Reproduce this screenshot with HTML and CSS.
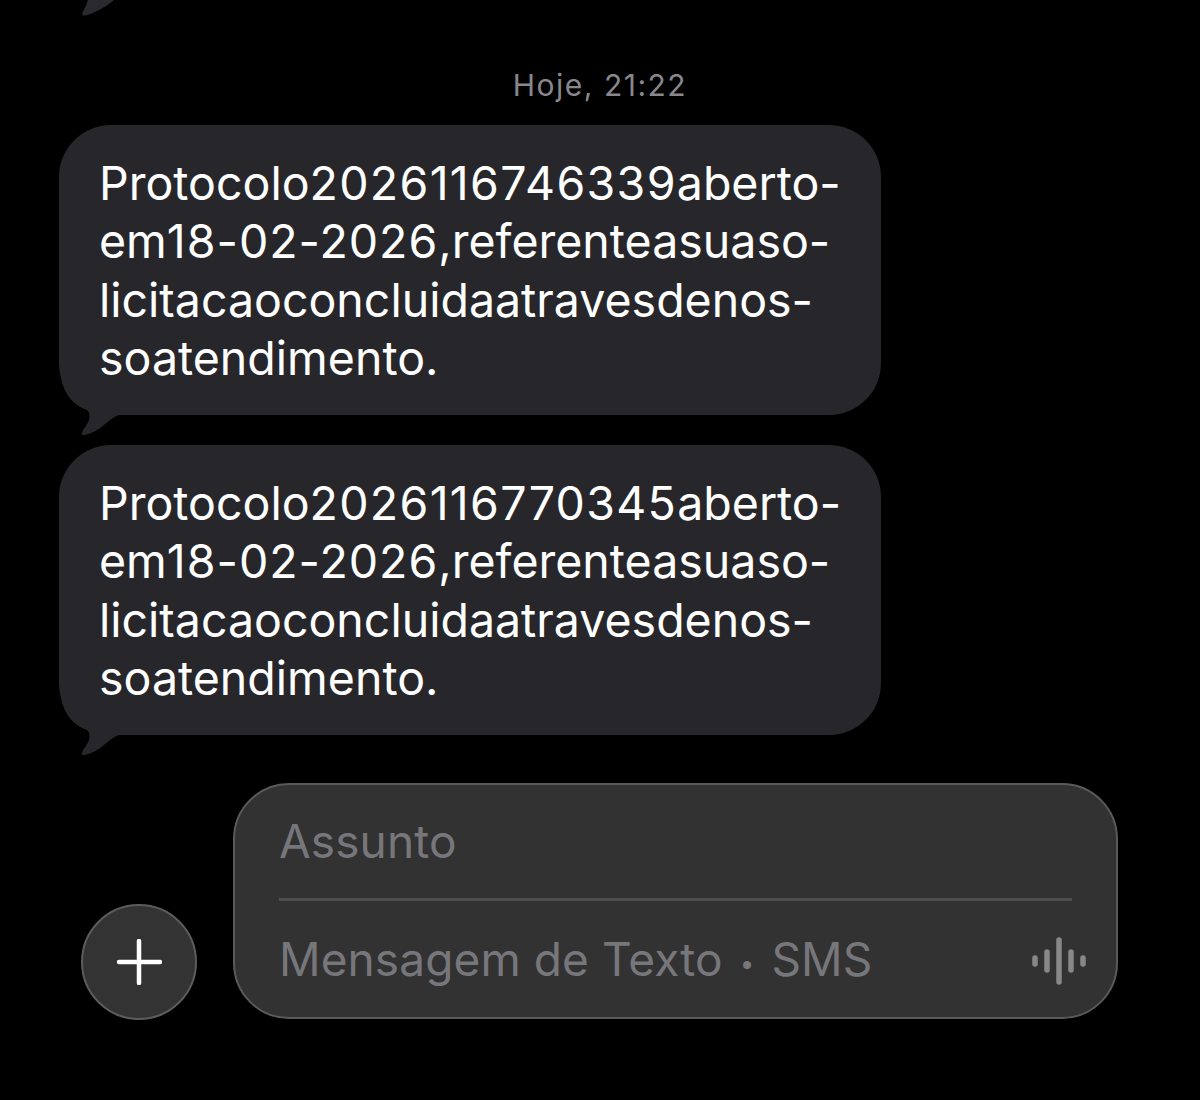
FILE: index.html
```html
<!DOCTYPE html>
<html lang="pt-BR">
<head>
    <meta charset="utf-8">
    <link rel="stylesheet" href="styles.css">
    <title>Mensagens</title>
</head>
<body>
    <svg class="old-tail" width="34" height="18" viewBox="0 0 34 18"><path d="M8 0 L34 0 C26 7 15 13 5 15.500 C2.500 16 1.500 14.500 2.500 12.500 C4.500 8.500 7 4 8 0 Z"/></svg>

    <div class="time">Hoje, 21:22</div>

    <div class="thread">
        <div class="bubble">
            Protocolo<span class="num">2026116746339</span>aberto-<br>
            em<span class="date">18-02-2026</span>,referenteasuaso-<br>
            licitacaoconcluidaatravesdenos-<br>
            soatendimento.
            <svg class="tail" width="60" height="61" viewBox="0 0 60 61"><path d="M1.500 0 C3 12 10 29 28 35 C31 37 31 42 30 45 C28 50 25 53 23 57 C22 60 24 60.500 26 60 C33 58.500 39 55 45 50 C50 46 54 42 60 40 L60 0 Z"/></svg>
        </div>
        <div class="bubble">
            Protocolo<span class="num">2026116770345</span>aberto-<br>
            em<span class="date">18-02-2026</span>,referenteasuaso-<br>
            licitacaoconcluidaatravesdenos-<br>
            soatendimento.
            <svg class="tail" width="60" height="61" viewBox="0 0 60 61"><path d="M1.500 0 C3 12 10 29 28 35 C31 37 31 42 30 45 C28 50 25 53 23 57 C22 60 24 60.500 26 60 C33 58.500 39 55 45 50 C50 46 54 42 60 40 L60 0 Z"/></svg>
        </div>
    </div>

    <div class="bottom">
        <button class="plus" type="button">
            <svg width="46" height="46" viewBox="0 0 46 46"><path d="M23 2 V44 M3 23 H44" fill="none" stroke="#fff" stroke-width="4.500" stroke-linecap="round"/></svg>
        </button>
        <div class="composer">
            <div class="subject">Assunto</div>
            <div class="message">
                <span>Mensagem de Texto <span class="dot">•</span> SMS</span>
                <svg width="54" height="48" viewBox="0 0 54 48"><g fill="none" stroke="#88888a" stroke-width="5.500" stroke-linecap="round"><path d="M3 21 V27"/><path d="M15 15 V33"/><path d="M27 3 V45"/><path d="M39 15 V33"/><path d="M51 21 V27"/></g></svg>
            </div>
        </div>
    </div>
</body>
</html>
```

FILE: styles.css
```css
* {
    box-sizing: border-box;
}

body {
    margin: 0;
    height: 1100px;
    overflow: hidden;
    position: relative;
    background-color: #000;
    font-family: Inter, "Liberation Sans", sans-serif;
    color: #fff;
}

.old-tail {
    position: absolute;
    left: 80px;
    top: 0;
    fill: #2a2a2e;
}

.time {
    padding-top: 68px;
    height: 125px;
    text-align: center;
    font-size: 30px;
    line-height: 34px;
    letter-spacing: 1.500px;
    color: #88888c;
}

.thread {
    display: flex;
    flex-direction: column;
    gap: 30px;
    padding-left: 59px;
}

.bubble {
    position: relative;
    width: 822px;
    height: 290px;
    padding: 29px 0 0 40px;
    background-color: #27272b;
    border-radius: 52px;
    font-size: 46.500px;
    line-height: 58.300px;
}

.num {
    letter-spacing: 1.300px;
}

.date {
    letter-spacing: 1px;
}

.tail {
    position: absolute;
    left: 0;
    bottom: -21px;
    fill: #27272b;
}

.bottom {
    display: flex;
    align-items: flex-end;
    gap: 36px;
    margin-top: 48px;
    padding-left: 81px;
}

.plus {
    display: flex;
    align-items: center;
    justify-content: center;
    width: 116px;
    height: 116px;
    padding: 0;
    margin-bottom: -1px;
    background-color: #333334;
    border: 2px solid #5c5c5d;
    border-radius: 50%;
}

.composer {
    width: 885px;
    height: 236px;
    padding: 0 44px;
    background-color: #323233;
    border: 2px solid #5a5a5b;
    border-radius: 56px;
    font-size: 46px;
    letter-spacing: 0.100px;
    color: #77777b;
}

.subject {
    height: 116px;
    padding-top: 28px;
    line-height: 56px;
    border-bottom: 3px solid #4e4e50;
}

.message {
    display: flex;
    align-items: center;
    justify-content: space-between;
    height: 118px;
    margin-right: -14px;
    padding-top: 2px;
    line-height: 56px;
}

.dot {
    font-size: 26px;
    vertical-align: 3px;
    margin: 0 4px;
}
```
